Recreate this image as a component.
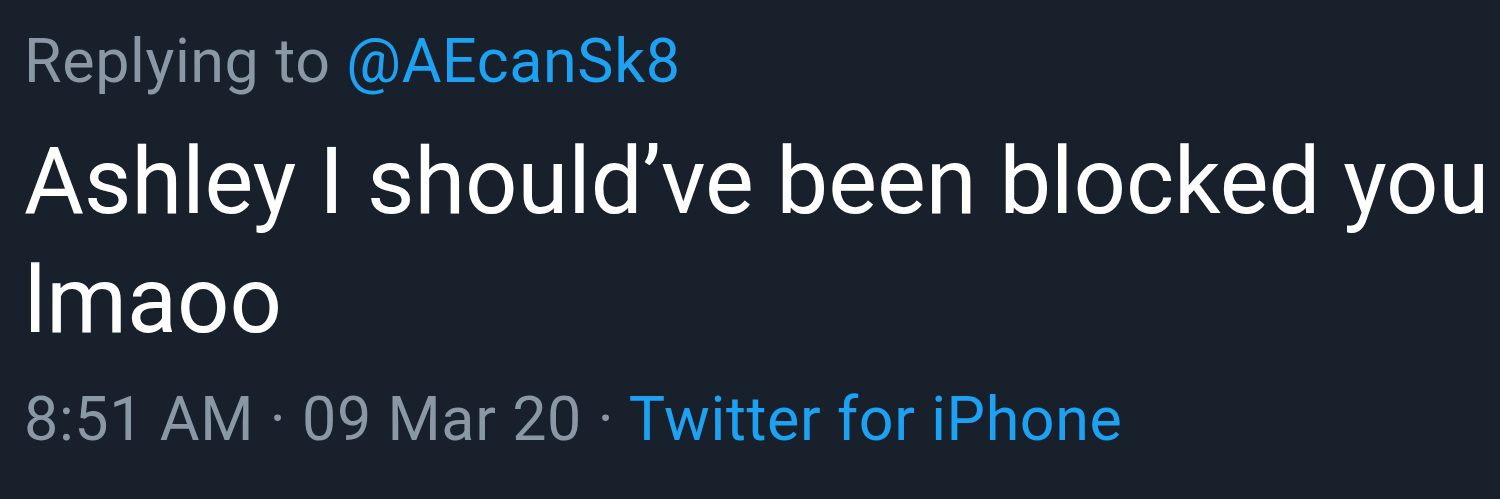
export default function App() {
  return (
    <div className="w-[1500px] h-[499px] bg-[#17202b] overflow-hidden pl-[24px] font-['Roboto',sans-serif]">
      <div className="pt-[25px] text-[61px] leading-[72px] tracking-[0.6px] text-[#8a98a5]">
        Replying to <span className="text-[#1da1f2]">@AEcanSk8</span>
      </div>
      <div className="mt-[25px] text-[92px] leading-[119px] text-white">
        <div>Ashley I should’ve been blocked you</div>
        <div>lmaoo</div>
      </div>
      <div className="mt-[23px] text-[61px] leading-[72px] tracking-[0.6px] text-[#8a98a5]">
        8:51 AM · 09 Mar 20 · <span className="text-[#1da1f2]">Twitter for iPhone</span>
      </div>
    </div>
  )
}
